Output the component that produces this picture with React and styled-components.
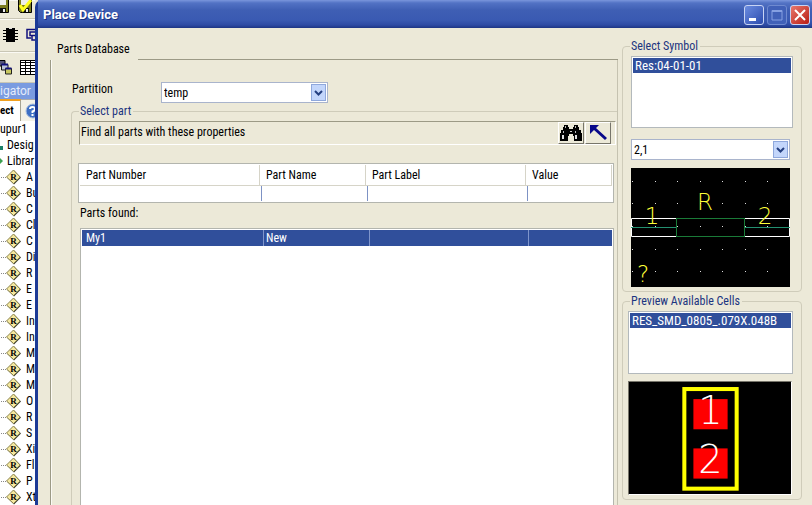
import { useState } from "react"
import styled, { createGlobalStyle } from "styled-components"

const GlobalStyle = createGlobalStyle`
  * {
    box-sizing: border-box;
  }

  body {
    margin: 0;
    background: #ece9d8;
    color: #000;
    font: 12px/14px "Roboto Condensed", "Roboto", sans-serif;
  }

  button, input, select {
    font: inherit;
    color: inherit;
  }
`

const Screen = styled.div`
  display: flex;
  height: 100vh;
  overflow: hidden;
`

/* ---- application window behind the dialog ---- */

const Backdrop = styled.aside`
  flex: 0 0 35px;
  overflow: hidden;
  background: #fff;
`

const ToolStrip = styled.div`
  display: flex;
  align-items: ${(props) => props.$align || "center"};
  justify-content: flex-end;
  gap: 8px;
  height: ${(props) => props.$height}px;
  padding-right: ${(props) => props.$end || 0}px;
  background: #ece9d8;
  border-bottom: 1px solid #c9c6b5;
  box-shadow: inset 0 1px 0 #fbfaf4;

  svg {
    flex: none;
  }
`

const PanelTitle = styled.div`
  display: flex;
  height: 16px;
  background: #7a9be0;
  color: #e4ecfb;
  font: 12px/16px "Roboto", sans-serif;
`

const PanelTabs = styled.div`
  display: flex;
  height: 22px;
  background: #ece9d8;
`

const PanelTab = styled.button`
  display: flex;
  align-items: center;
  flex: none;
  width: ${(props) => (props.$active ? 21 : 20)}px;
  padding: 0;
  border: 0;
  border-top: ${(props) => (props.$active ? "2px solid #f0a020" : "1px solid #aaa")};
  border-right: 1px solid #a5a393;
  background: ${(props) => (props.$active ? "#fff" : "#f3f1e6")};
  font: bold 11px/16px "Roboto Condensed", sans-serif;
`

const Tree = styled.ul`
  margin: 0;
  padding: 0;
  list-style: none;
`

const TreeItem = styled.li`
  display: flex;
  align-items: center;
  gap: ${(props) => (props.$leaf ? 5 : 4)}px;
  height: 16px;
  white-space: nowrap;

  svg {
    flex: none;
  }
`

/* ---- dialog ---- */

const Dialog = styled.main`
  display: flex;
  flex: 1;
  flex-direction: column;
  min-width: 0;
  border-left: 3px solid #1c3a96;
  border-radius: 7px 0 0 0;
  background: #ece9d8;
`

const TitleBar = styled.header`
  display: flex;
  flex: 0 0 28px;
  align-items: center;
  gap: 3px;
  padding: 2px 2px 0 5px;
  background: linear-gradient(#7a96dc 0, #5272c4 3px, #3f5fb4 10px, #3a5ab2 20px, #2e4ba4 25px, #1d3584 28px);
`

const Title = styled.h1`
  flex: 1;
  margin: 0;
  color: #fff;
  font: bold 13px/16px "Roboto", sans-serif;
  text-shadow: 1px 1px 0 #1b3180;
`

const WindowButton = styled.button`
  display: grid;
  place-items: center;
  width: 20px;
  height: 20px;
  padding: 0;
  border: 1px solid ${(props) => (props.disabled ? "#6f8ad0" : "#c8d4f4")};
  border-radius: 3px;
  background: ${(props) => props.$fill};
`

const DialogBody = styled.div`
  display: flex;
  flex: 1;
  min-height: 0;
  padding: 0 10px 0 12px;
`

const TabPage = styled.section`
  display: flex;
  flex: 1;
  flex-direction: column;
  min-width: 0;
`

const TabLabel = styled.h2`
  margin: 0;
  padding: 14px 7px 3px;
  font: inherit;
`

const TabEdge = styled.div`
  height: 1px;
  margin-left: 88px;
  background: #9c9a86;
`

const TabContent = styled.div`
  display: flex;
  flex: 1;
  flex-direction: column;
  padding: 22px 0 0 20px;
  border-left: 1px solid #9c9a86;
  border-right: 1px solid #c5c2b0;
  box-shadow: inset 1px 0 0 #fbfaf4;
`

const Field = styled.div`
  display: flex;
  align-items: flex-start;

  label {
    width: 90px;
    padding-left: 1px;
  }
`

const Group = styled.fieldset`
  min-width: 0;
  margin: 0;
  padding: 3px 8px 4px ${(props) => props.$inset}px;
  border: 1px solid #cfccba;
  border-radius: 4px;

  & + & {
    margin-top: 2px;
  }
`

const PartGroup = styled(Group)`
  display: flex;
  flex: 1;
  flex-direction: column;
  margin-top: 1px;
  padding: 3px 0 0 6px;
  border-width: 1px 0 0 1px;
  border-radius: 4px 0 0 0;
`

const Legend = styled.legend`
  margin-left: ${(props) => props.$indent || 0}px;
  padding: 0 2px 0 1px;
  color: #1c3580;
`

const SearchBar = styled.div`
  display: flex;
  align-items: center;
  gap: 1px;
  height: 24px;
  margin: 0 1px 18px;
  padding-right: 4px;
  border: solid;
  border-width: 1px;
  border-color: #9c9a86 #fff #fff #9c9a86;

  span {
    flex: 1;
    padding-bottom: 2px;
    padding-left: 1px;
  }
`

const IconButton = styled.button`
  display: grid;
  place-items: center;
  width: 26px;
  height: 22px;
  padding: 0;
  border: 1px solid;
  border-color: #fff #77756a #77756a #fff;
  background: #ece9d8;
`

const GridBox = styled.div`
  margin: 0 3px 0 ${(props) => props.$indent || 0}px;
  padding: 1px;
  border: 1px solid #b3b5ae;
  background: #fff;
  ${(props) => props.$grow && "flex: 1; border-bottom: 0;"}
`

const Grid = styled.table`
  width: 100%;
  table-layout: fixed;
  border-collapse: separate;
  border-spacing: 0;

  th, td {
    padding: 0;
    font-weight: normal;
    text-align: left;
  }

  th {
    height: 21px;
    padding-left: 6px;
    border-bottom: 1px solid #d6d4c8;
    border-right: 1px solid #d6d4c8;
  }
`

const FilterCell = styled.td`
  && {
    padding-left: 1px;
  }
`

const Filter = styled.input`
  display: block;
  width: 100%;
  height: 15px;
  padding: 0 4px;
  border: 0;
  border-left: 1px solid ${(props) => (props.$first ? "#fff" : "#7d92c4")};
  outline: 0;
  background: #fff;
`

const ResultRow = styled.tr`
  background: #304f9b;
  color: #fff;

  td {
    height: 16px;
    padding-left: 2px;
    border-right: 1px solid #7f95cb;
  }

  td:first-child {
    padding-left: 4px;
  }

  td:last-child {
    border-right: 0;
  }
`

const Caption = styled.div`
  padding: 3px 2px 8px;
`

const Side = styled.div`
  flex: 0 0 180px;
  margin-left: 4px;
  padding-top: 11px;
`

const ListBox = styled.select`
  display: block;
  width: 100%;
  height: ${(props) => props.$height}px;
  padding: 1px;
  border: 1px solid #b3b9bc;
  border-radius: 0;
  outline: 0;
  overflow: hidden;
  background: #fff;
  font-size: 13px;

  option {
    min-height: 0;
    padding: 0 2px;
    line-height: 14px;
  }

  option:checked {
    background: #304f9b linear-gradient(#304f9b, #304f9b);
    color: #fff;
  }
`

const Combo = styled.div`
  position: relative;
  width: ${(props) => props.$width || "auto"};
  margin: ${(props) => props.$margin || 0};

  select {
    display: block;
    width: 100%;
    height: 21px;
    padding: 0 20px 0 2px;
    border: 1px solid #a9b4cc;
    border-radius: 0;
    outline: 0;
    appearance: none;
    background: #fff;
  }

  svg {
    position: absolute;
    top: 2px;
    right: 2px;
    pointer-events: none;
  }
`

const Preview = styled.svg`
  display: block;
  width: 100%;
  height: auto;
  background: #000;
`

const CellFrame = styled.div`
  margin: 7px 1px 0 0;
  border: 1px solid;
  border-color: #77756a #fff #fff #77756a;
`

const SymbolArea = styled.div`
  padding-left: 2px;
`

const SymbolFrame = styled.div`
  margin-right: 3px;
`

const treeLeaves = [
  "A", "Bu", "C", "Cl", "C", "Di", "R", "E", "E", "In", "In",
  "M", "M", "M", "O", "R", "S", "Xi", "Fl", "P", "Xt",
]

const columns = [
  { name: "Part Number", value: "My1" },
  { name: "Part Name", value: "New" },
  { name: "Part Label", value: "" },
  { name: "Value", value: "" },
]

const LeafIcon = () => (
  <svg width="21" height="16" viewBox="0 0 21 16">
    <path d="M1 8.500H6" stroke="#888" strokeDasharray="1 1" />
    <path d="M14 1.500L21 8.500L14 15.500L7 8.500Z" fill="#3a3a2c" />
    <path d="M13.500 1L20 8L13.500 14.500L6.500 8Z" fill="#f6e9a0" stroke="#8b844c" />
    <text x="13.500" y="11" textAnchor="middle" fontFamily="Liberation Serif, serif" fontSize="9" fontWeight="bold">R</text>
  </svg>
)

const SaveIcon = ({ checked }) => (
  <svg width="15" height="14" viewBox="0 0 15 14">
    <path d="M.5 -1H13.500V12.500H2.500L.5 10.500Z" fill="#7c7c20" stroke="#000" />
    <path d="M3 0H11V5H3Z" fill="#eee" />
    <path d="M4 8H11V12H4Z" fill="#111" />
    <path d="M8 9H10V12H8Z" fill="#eee" />
    {checked && <path d="M2 5L5 10L13 0" fill="none" stroke="#ffff20" strokeWidth="3" />}
  </svg>
)

const ChipIcon = () => (
  <svg width="15" height="16" viewBox="0 0 15 16">
    <path d="M3 1H12V15H3Z" fill="#000" />
    <path d="M0 3.500H15M0 6.500H15M0 9.500H15M0 12.500H15" stroke="#000" />
    <path d="M6 1H9V2H6Z" fill="#ddd" />
  </svg>
)

const FramesIcon = () => (
  <svg width="9" height="14" viewBox="0 0 9 14">
    <path d="M9 1.500H1V10H5M9 4H4V7.500H9M6 8V12H9" fill="none" stroke="#10107c" strokeWidth="1.500" />
  </svg>
)

const WindowsIcon = () => (
  <svg width="12" height="16" viewBox="0 0 12 16">
    <path d="M-2 1.500H5V7H-2Z" fill="#557" stroke="#000" />
    <path d="M1.500 5.500H8V11H1.500Z" fill="#bcc4d8" stroke="#111" />
    <path d="M5.500 9.500H11.500V15H5.500Z" fill="#c8c860" stroke="#222" />
    <path d="M1.500 5.500H8M5.500 9.500H11.500" stroke="#10107c" strokeWidth="2" />
  </svg>
)

const TableIcon = () => (
  <svg width="15" height="15" viewBox="0 0 15 15">
    <path d="M0 0H15V15H0Z" fill="#fff" />
    <path d="M0 .5H15M0 2.500H15M0 5.500H15M0 8.500H15M0 11.500H15M0 14.500H15M.5 0V15M5.500 0V15M10.500 0V15" stroke="#000" />
  </svg>
)

const HelpIcon = () => (
  <svg width="14" height="16" viewBox="0 0 14 16">
    <circle cx="12" cy="8" r="7" fill="#3d6fc4" stroke="#a9bede" />
    <path d="M9 6Q9 4 11.500 4Q14 4 14 6Q14 7.500 11.500 8.500V10M11.500 11V13" fill="none" stroke="#fff" strokeWidth="2" />
  </svg>
)

const BinocularsIcon = () => (
  <svg width="24" height="18" viewBox="0 0 24 18">
    <path d="M5 1H9V3H10V5H14V3H15V1H19V3H20V6H22V9H23V17H15V12H14V10H10V12H9V17H1V9H2V6H4V3H5Z" fill="#000" />
    <path d="M6.500 2V4M16.500 2V4M4.500 7V9M16.500 7V9" stroke="#bbb" />
    <path d="M4 11V15M17 11V15" stroke="#ddd" strokeWidth="2" />
    <path d="M11 7H13V8H11Z" fill="#ccc" />
  </svg>
)

const ArrowIcon = () => (
  <svg width="20" height="18" viewBox="0 0 20 18">
    <path d="M2 1H11L8 4L19 14L17 16L6 6L2 10Z" fill="#08088a" />
  </svg>
)

const DropArrow = () => (
  <svg width="15" height="17" viewBox="0 0 15 17">
    <rect x=".5" y=".5" width="14" height="16" fill="#c3d6fb" stroke="#8fa8dc" />
    <path d="M4 7L7.500 10.500L11 7" fill="none" stroke="#243f80" strokeWidth="2" />
  </svg>
)

const gridX = [1, 24, 46, 69, 91, 114, 136]
const gridY = [13, 35, 58, 81, 103]

const SymbolPreview = () => (
  <Preview viewBox="0 0 159 119" role="img" aria-label="Symbol preview">
    {gridY.map((y) => gridX.map((x) => <rect key={`${x}-${y}`} x={x} y={y} width="1" height="1" fill="#ddd" />))}
    <path d="M45 50.500H.5V68.500H45M114 50.500H158.500V68.500H114" fill="none" stroke="#fff" />
    <path d="M0 59.500H45M114 59.500H159" stroke="#249070" />
    <rect x="45.500" y="50.500" width="68" height="18" fill="none" stroke="#1a7a38" />
    <g fill="#ffff38" fontFamily="DejaVu Sans Light, DejaVu Sans, sans-serif" fontWeight="200" fontSize="23" textAnchor="middle">
      <text x="74" y="42">R</text>
      <text x="21" y="56">1</text>
      <text x="134" y="56">2</text>
      <text x="12" y="114">?</text>
    </g>
  </Preview>
)

const CellPreview = () => (
  <Preview viewBox="0 0 161 111" role="img" aria-label="Cell preview">
    <rect x="55" y="7" width="52" height="99" fill="none" stroke="#ff0" strokeWidth="4" />
    <rect x="64" y="17" width="34" height="30" fill="#f00" />
    <rect x="64" y="66" width="34" height="30" fill="#f00" />
    <g fill="#fff" fontFamily="DejaVu Sans Light, DejaVu Sans, sans-serif" fontWeight="200" fontSize="38" textAnchor="middle">
      <text x="81" y="42">1</text>
      <text x="81" y="90">2</text>
    </g>
  </Preview>
)

const ColumnWidths = ({ widths }) => (
  <colgroup>
    {widths.map((width, index) => (
      <col key={index} width={width} />
    ))}
    <col />
  </colgroup>
)

function Navigator() {
  return (
    <Backdrop>
      <ToolStrip $height={19} $align="flex-start" $end={2}>
        <SaveIcon />
        <SaveIcon checked />
      </ToolStrip>
      <ToolStrip $height={33}>
        <ChipIcon />
        <FramesIcon />
      </ToolStrip>
      <ToolStrip $height={31}>
        <WindowsIcon />
        <TableIcon />
      </ToolStrip>
      <PanelTitle>igator</PanelTitle>
      <PanelTabs>
        <PanelTab $active>ect</PanelTab>
        <PanelTab aria-label="Help">
          <HelpIcon />
        </PanelTab>
      </PanelTabs>
      <Tree>
        <TreeItem>upur1</TreeItem>
        <TreeItem>
          <svg width="3" height="16" viewBox="0 0 3 16">
            <path d="M0 9H3V13H0Z" fill="#1c8068" />
          </svg>
          Desig
        </TreeItem>
        <TreeItem>
          <svg width="3" height="16" viewBox="0 0 3 16">
            <path d="M0 5L3 8L0 11Z" fill="#3ca050" />
          </svg>
          Librar
        </TreeItem>
        {treeLeaves.map((leaf, index) => (
          <TreeItem key={index} $leaf>
            <LeafIcon />
            {leaf}
          </TreeItem>
        ))}
      </Tree>
    </Backdrop>
  )
}

export default function App() {
  const [filters, setFilters] = useState({})

  return (
    <Screen>
      <GlobalStyle />
      <Navigator />
      <Dialog>
        <TitleBar>
          <Title>Place Device</Title>
          <WindowButton aria-label="Minimize" $fill="linear-gradient(135deg, #6b8ce0, #2c4cae)">
            <svg width="14" height="14" viewBox="0 0 14 14">
              <path d="M2 10H9V13H2Z" fill="#fff" />
            </svg>
          </WindowButton>
          <WindowButton aria-label="Maximize" disabled $fill="#4161b8">
            <svg width="14" height="14" viewBox="0 0 14 14">
              <path d="M2 2.500H12V12H2Z" fill="none" stroke="#86a0e2" />
              <path d="M2 3H12" stroke="#86a0e2" strokeWidth="2" />
            </svg>
          </WindowButton>
          <WindowButton aria-label="Close" $fill="linear-gradient(135deg, #e8786c, #b81c14)">
            <svg width="14" height="14" viewBox="0 0 14 14">
              <path d="M2 2L12 12M12 2L2 12" stroke="#fff" strokeWidth="2" />
            </svg>
          </WindowButton>
        </TitleBar>

        <DialogBody>
          <TabPage>
            <TabLabel>Parts Database</TabLabel>
            <TabEdge />
            <TabContent>
              <Field>
                <label htmlFor="partition">Partition</label>
                <Combo $width="167px">
                  <select id="partition">
                    <option>temp</option>
                  </select>
                  <DropArrow />
                </Combo>
              </Field>

              <PartGroup>
                <Legend $indent={1}>Select part</Legend>
                <SearchBar>
                  <span>Find all parts with these properties</span>
                  <IconButton aria-label="Find">
                    <BinocularsIcon />
                  </IconButton>
                  <IconButton aria-label="Pick">
                    <ArrowIcon />
                  </IconButton>
                </SearchBar>

                <GridBox>
                  <Grid>
                    <ColumnWidths widths={[180, 106, 160]} />
                    <thead>
                      <tr>
                        {columns.map((column) => (
                          <th key={column.name}>{column.name}</th>
                        ))}
                      </tr>
                    </thead>
                    <tbody>
                      <tr>
                        {columns.map((column, index) => (
                          <FilterCell key={column.name}>
                            <Filter
                              $first={index === 0}
                              aria-label={column.name}
                              value={filters[column.name] || ""}
                              onChange={(e) => setFilters({ ...filters, [column.name]: e.target.value })}
                            />
                          </FilterCell>
                        ))}
                      </tr>
                    </tbody>
                  </Grid>
                </GridBox>

                <Caption>Parts found:</Caption>
                <GridBox $indent={2} $grow>
                  <Grid aria-label="Parts found">
                    <ColumnWidths widths={[182, 106, 159]} />
                    <tbody>
                      <ResultRow>
                        {columns.map((column) => (
                          <td key={column.name}>{column.value}</td>
                        ))}
                      </ResultRow>
                    </tbody>
                  </Grid>
                </GridBox>
              </PartGroup>
            </TabContent>
          </TabPage>

          <Side>
            <Group $inset={6}>
              <Legend $indent={1}>Select Symbol</Legend>
              <SymbolArea>
                <ListBox size={4} $height={72} defaultValue="Res:04-01-01" aria-label="Select Symbol">
                  <option>Res:04-01-01</option>
                </ListBox>
                <Combo $margin="11px 3px 8px 0">
                  <select aria-label="Pin order">
                    <option>2,1</option>
                  </select>
                  <DropArrow />
                </Combo>
                <SymbolFrame>
                  <SymbolPreview />
                </SymbolFrame>
              </SymbolArea>
            </Group>
            <Group $inset={5}>
              <Legend $indent={2}>Preview Available Cells</Legend>
              <ListBox size={4} $height={63} defaultValue="RES_SMD_0805_.079X.048B" aria-label="Preview Available Cells">
                <option>RES_SMD_0805_.079X.048B</option>
              </ListBox>
              <CellFrame>
                <CellPreview />
              </CellFrame>
            </Group>
          </Side>
        </DialogBody>
      </Dialog>
    </Screen>
  )
}
